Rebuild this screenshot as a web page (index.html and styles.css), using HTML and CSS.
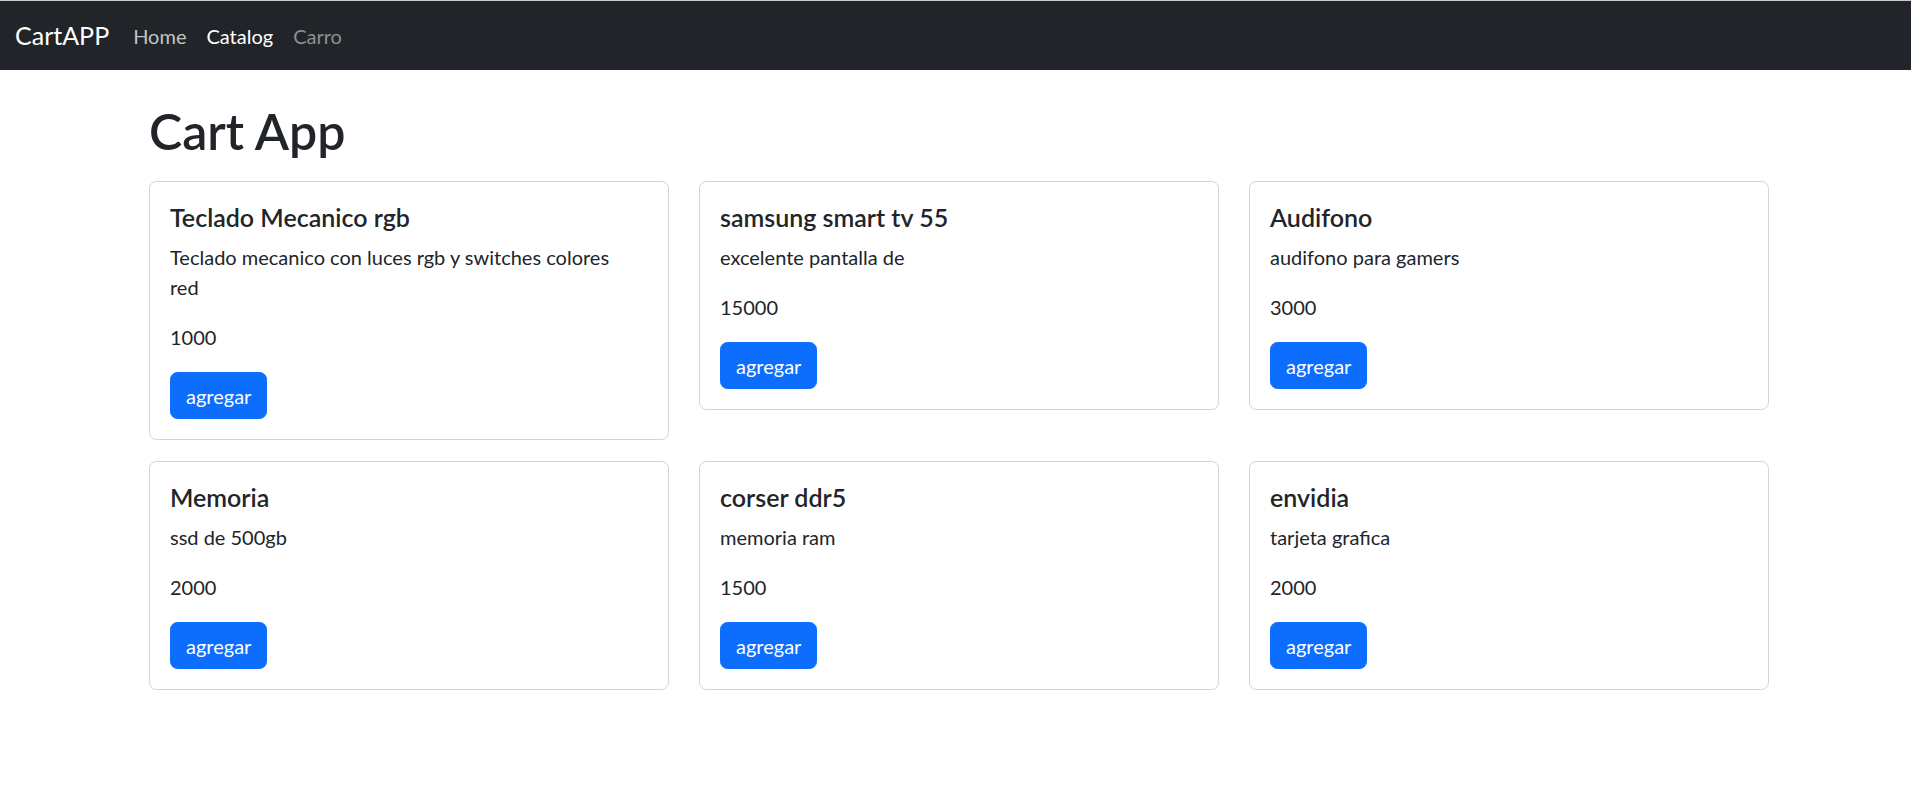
FILE: index.html
```html
<!DOCTYPE html>
<html lang="es">
<head>
<meta charset="utf-8">
<title>CartAPP</title>
<link rel="stylesheet" href="styles.css">
</head>
<body>
<nav class="navbar">
  <div class="navbar-inner">
    <a class="brand" href="#">CartAPP</a>
    <ul class="nav">
      <li><a class="nav-link nav-home" href="#">Home</a></li>
      <li><a class="nav-link nav-active" href="#">Catalog</a></li>
      <li><a class="nav-link nav-muted" href="#">Carro</a></li>
    </ul>
  </div>
</nav>
<main class="container">
  <h1 class="title">Cart App</h1>
  <div class="grid">
    <div class="card">
      <h5 class="card-title">Teclado Mecanico rgb</h5>
      <p class="card-text">Teclado mecanico con luces rgb y switches colores<br>red</p>
      <p class="card-text">1000</p>
      <button class="btn">agregar</button>
    </div>
    <div class="card">
      <h5 class="card-title">samsung smart tv 55</h5>
      <p class="card-text">excelente pantalla de</p>
      <p class="card-text">15000</p>
      <button class="btn">agregar</button>
    </div>
    <div class="card">
      <h5 class="card-title">Audifono</h5>
      <p class="card-text">audifono para gamers</p>
      <p class="card-text">3000</p>
      <button class="btn">agregar</button>
    </div>
    <div class="card">
      <h5 class="card-title">Memoria</h5>
      <p class="card-text">ssd de 500gb</p>
      <p class="card-text">2000</p>
      <button class="btn">agregar</button>
    </div>
    <div class="card">
      <h5 class="card-title">corser ddr5</h5>
      <p class="card-text">memoria ram</p>
      <p class="card-text">1500</p>
      <button class="btn">agregar</button>
    </div>
    <div class="card">
      <h5 class="card-title">envidia</h5>
      <p class="card-text">tarjeta grafica</p>
      <p class="card-text">2000</p>
      <button class="btn">agregar</button>
    </div>
  </div>
</main>
</body>
</html>
```
FILE: styles.css
```css
* { box-sizing: border-box; }
html, body { margin: 0; padding: 0; }
body {
  font-family: "Segoe UI", "Lato", "Liberation Sans", sans-serif;
  font-size: 20px;
  line-height: 1.5;
  color: #212529;
  background: #fff;
}
.navbar {
  background: #212529;
  height: 70px;
  border-top: 1px solid #c9c9c9;
  display: flex;
  align-items: center;
}
.navbar-inner {
  padding: 0 15px;
  display: flex;
  align-items: center;
}
.brand {
  color: #fff;
  font-size: 25px;
  line-height: 37.5px;
  text-decoration: none;
  margin-right: 14px;
}
.nav {
  list-style: none;
  margin: 0;
  padding: 0;
  display: flex;
}
.nav-link {
  display: block;
  padding: 10px 10px;
  text-decoration: none;
  line-height: 30px;
}
.nav-home { color: #c3c4c5; }
.nav-active { color: #fff; }
.nav-muted { color: #8d8f92; }
.container {
  width: 1620px;
  margin-left: calc(50% - 806.5px);
}
.title {
  font-size: 50px;
  font-weight: 600;
  line-height: 60px;
  margin: 31px 0 0 0;
}
.grid {
  margin-top: 20px;
  display: grid;
  grid-template-columns: repeat(3, 520px);
  column-gap: 30px;
  row-gap: 21px;
  align-items: start;
}
.card {
  border: 1px solid #d3d3d3;
  border-radius: 7.5px;
  padding: 20px;
}
.card-title {
  font-size: 25px;
  font-weight: 600;
  line-height: 30px;
  margin: 0 0 10px 0;
}
.card-text {
  margin: 0 0 20px 0;
}
.btn {
  font-family: inherit;
  font-size: 20px;
  line-height: 30px;
  padding: 7.5px 15px;
  color: #fff;
  background: #0d6efd;
  border: 1px solid #0d6efd;
  border-radius: 7.5px;
  cursor: pointer;
  display: block;
}
```
